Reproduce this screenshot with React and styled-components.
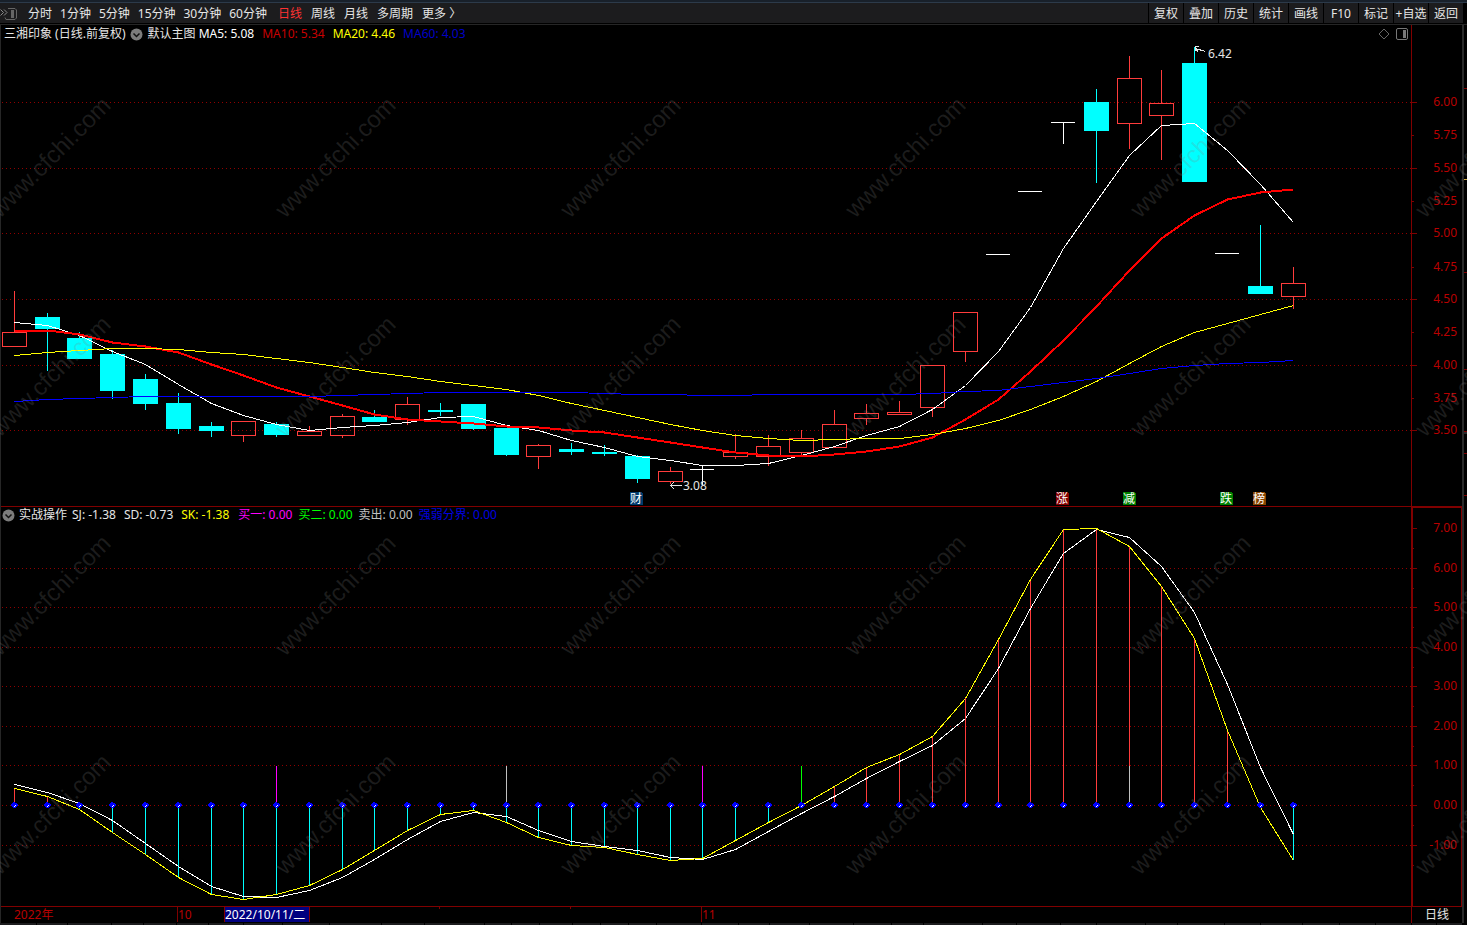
import React from "react";
import styled, { createGlobalStyle } from "styled-components";

const GlobalStyle = createGlobalStyle`
  * { box-sizing: border-box; }
  html, body { margin: 0; background: #000; }
  body, button {
    font-family: "Noto Sans", "Noto Sans CJK SC", sans-serif;
    font-size: 12px;
    line-height: 16px;
  }
`;

const DARK_RED = "#800000";
const LABEL_RED = "#b80000";
const UP = "#ff3c3c";
const DOWN = "#00ffff";

const Page = styled.div`
  position: relative;
  min-height: 100vh;
  overflow: hidden;
  background: #000;
  color: #e6e6e6;
  display: flex;
  flex-direction: column;
`;

const WindowEdge = styled.div`
  height: 3px;
  background: #18202a;
  border-bottom: 1px solid #2c3a4a;
`;

const Toolbar = styled.header`
  display: flex;
  height: 22px;
  padding: 0 4px 1px 0;
  border-bottom: 1px solid #262626;
`;

const ToolbarMain = styled.nav`
  flex: 1;
  display: flex;
  align-items: center;
  padding-top: 2px;
  background: #1c1c1e;
`;

const PeriodGroup = styled.div`
  display: flex;
  gap: ${(p) => p.$gap}px;
  margin-left: ${(p) => p.$start}px;
`;

const PlainButton = styled.button`
  padding: 0;
  border: 0;
  background: none;
  white-space: pre;
  color: ${(p) => (p.$active ? "#ff3232" : "#e6e6e6")};
`;

const IconButton = styled(PlainButton)`
  display: flex;
`;

const Actions = styled.div`
  display: grid;
  grid-template-columns: repeat(9, 35px);
`;

const ActionButton = styled(PlainButton)`
  padding-top: 2px;
  background: #1c1c1e;
  border-left: 1px solid #000;
`;

const Workspace = styled.div`
  display: flex;
`;

const Charts = styled.main`
  flex: 1;
  min-width: 0;
  border-left: 1px solid #262626;
`;

const Panel = styled.section`
  display: grid;
  > * { grid-area: 1 / 1; }
`;

const ChartSvg = styled.svg`
  display: block;
  width: 100%;
  height: auto;
  shape-rendering: crispEdges;
  text {
    font-family: "Noto Sans", "Noto Sans CJK SC", sans-serif;
    font-size: 12px;
  }
`;

const Legend = styled.div`
  z-index: 1;
  align-self: start;
  display: flex;
  align-items: center;
  padding: ${(p) => (p.$indicator ? "0 54px 0 1px" : "1px 54px 0 3px")};
  white-space: pre;
`;

const LegendName = styled.span`
  margin: 0 5px 0 4px;
`;

const Metrics = styled.span`
  display: flex;
  gap: ${(p) => p.$gap}px;
  margin-right: 9px;
`;

const Metric = styled.span`
  color: ${(p) => p.$color};
`;

const LegendTools = styled.span`
  margin-left: auto;
  display: flex;
  gap: 6px;
`;

const TimeAxis = styled.div`
  display: grid;
  grid-template-columns: 13fr 163fr 47fr 85fr 130fr 131fr 131fr 710fr 51fr;
  height: 16px;
  line-height: 15px;
  color: ${LABEL_RED};
`;

const TimeCell = styled.span`
  white-space: nowrap;
  border-left: ${(p) => (p.$tick ? `1px solid ${DARK_RED}` : "0")};
  height: ${(p) => (p.$short ? 2 : 15)}px;
`;

const CursorDate = styled(TimeCell)`
  background: #000080;
  color: #fff;
  border-left: 1px solid ${DARK_RED};
`;

const PeriodCell = styled(TimeCell)`
  color: #e6e6e6;
  text-align: center;
  height: 16px;
`;

const SideEdge = styled.svg`
  width: 5px;
  flex: none;
  align-self: stretch;
  height: auto;
  display: block;
  border-left: 2px solid #2a2a2a;
  shape-rendering: crispEdges;
`;

const Dock = styled.footer`
  display: flex;
  gap: 1px;
  height: 2px;
  padding-right: 5px;
`;

const DockTab = styled.span`
  flex: ${(p) => p.$size} 1 0;
  background: #1c1c1e;
`;

const Watermarks = styled.svg`
  position: absolute;
  inset: 0;
  width: 100%;
  height: 100%;
  z-index: 2;
  pointer-events: none;
  text {
    font-family: "Liberation Sans", sans-serif;
    font-size: 24px;
    fill: rgba(128, 128, 128, 0.22);
  }
`;

const XS = [
  14, 47, 79, 112, 145, 178, 211, 243, 276, 309, 342, 374, 407, 440, 473, 506,
  538, 571, 604, 637, 670, 702, 735, 768, 801, 834, 866, 899, 932, 965, 998,
  1030, 1063, 1096, 1129, 1161, 1194, 1227, 1260, 1293,
];

// kind, high, body top, body bottom, low
const CANDLES = [
  ["u", 291, 332, 347, 347], ["d", 313, 317, 329, 371], ["d", 332, 338, 359, 359],
  ["d", 350, 354, 391, 399], ["d", 374, 379, 404, 410], ["d", 393, 403, 429, 434],
  ["d", 422, 426, 431, 437], ["u", 421, 421, 436, 442], ["d", 422, 424, 435, 437],
  ["u", 426, 431, 436, 436], ["u", 414, 416, 436, 438], ["d", 410, 417, 422, 422],
  ["u", 397, 404, 420, 425], ["d", 403, 410, 412, 416], ["d", 404, 404, 429, 430],
  ["d", 428, 428, 455, 456], ["u", 444, 445, 457, 469], ["d", 443, 449, 452, 455],
  ["d", 445, 452, 454, 456], ["d", 455, 456, 479, 483], ["u", 467, 471, 482, 484],
  ["f", 465, 469, 470, 485], ["u", 434, 452, 457, 459], ["u", 435, 446, 457, 466],
  ["u", 430, 438, 453, 455], ["u", 410, 424, 448, 448], ["u", 404, 413, 419, 425],
  ["u", 401, 412, 415, 415], ["u", 365, 365, 408, 417], ["u", 312, 312, 352, 362],
  ["f", 254, 254, 255, 255], ["f", 191, 191, 192, 192], ["f", 122, 122, 123, 144],
  ["d", 89, 102, 131, 183], ["u", 56, 78, 124, 149], ["u", 70, 103, 116, 160],
  ["d", 47, 63, 182, 182], ["f", 253, 253, 254, 254], ["d", 225, 286, 294, 294],
  ["u", 267, 283, 297, 309],
];

const MA5 = [322, 325, 335, 351, 364, 384, 403, 415, 424, 430, 427, 425, 422, 417, 416, 425, 430, 440, 447, 456, 460, 465, 465, 463, 455, 446, 435, 426, 409, 385, 351, 307, 248, 201, 155, 125, 123, 150, 184, 222];
const MA10 = [330, 330, 334, 342, 346, 352, 364, 375, 387, 396, 405, 414, 419, 421, 423, 426, 427, 430, 432, 437, 442, 447, 452, 455, 456, 454, 451, 446, 437, 419, 399, 371, 340, 306, 270, 238, 215, 199, 192, 189];
const MA20 = [355, 352, 350, 348, 348, 349, 352, 354, 358, 362, 367, 372, 376, 381, 385, 389, 395, 403, 410, 417, 424, 430, 435, 438, 440, 439, 438, 438, 434, 428, 420, 409, 396, 381, 363, 346, 332, 323, 314, 305];
const MA60 = [401, 399, 398, 397, 396, 396, 396, 396, 396, 396, 395, 394, 393, 392, 392, 392, 392, 392, 393, 394, 394, 395, 395, 394, 394, 394, 394, 394, 393, 391, 390, 386, 382, 378, 373, 368, 365, 363, 362, 360];

const SK = [788, 796, 809, 832, 854, 877, 894, 899, 894, 885, 869, 850, 830, 814, 810, 822, 837, 845, 847, 854, 860, 858, 840, 822, 805, 786, 767, 754, 736, 698, 639, 579, 529, 528, 546, 586, 638, 730, 807, 860];
const SD = [784, 792, 803, 820, 843, 866, 886, 896, 897, 890, 877, 859, 839, 821, 812, 816, 830, 841, 846, 850, 857, 859, 849, 831, 813, 796, 778, 761, 745, 718, 668, 608, 553, 529, 537, 566, 612, 684, 767, 834];

const SIGNALS = [[276, "#ff00ff"], [506, "#c0c0c0"], [702, "#ff00ff"], [801, "#00ff00"], [1129, "#c0c0c0"]];

const PRICE_SCALE = [["6.00", 102], ["5.75", 135], ["5.50", 168], ["5.25", 201], ["5.00", 233], ["4.75", 267], ["4.50", 299], ["4.25", 332], ["4.00", 365], ["3.75", 398], ["3.50", 430]];
const INDICATOR_SCALE = [["7.00", 528], ["6.00", 568], ["5.00", 607], ["4.00", 647], ["3.00", 686], ["2.00", 726], ["1.00", 765], ["0.00", 805], ["-1.00", 845]];

const BADGES = [[630, "财", "#003a6c"], [1056, "涨", "#860000"], [1123, "减", "#008000"], [1220, "跌", "#008000"], [1253, "榜", "#884400"]];

const MINUTES = ["分时", "1分钟", "5分钟", "15分钟", "30分钟", "60分钟"];
const PERIODS = ["日线", "周线", "月线", "多周期", "更多 〉"];
const ACTIONS = ["复权", "叠加", "历史", "统计", "画线", "F10", "标记", "+自选", "返回"];

const DOCK_TABS = [37, 31, 45, 32, 33, 32, 35, 40, 48, 52, 44, 61, 27, 28, 33, 28, 28, 28, 45, 38, 31, 40, 45, 38, 32, 60, 34, 45, 36, 50, 32, 48, 36, 42, 38, 36, 36, 25, 26];

function Series({ values, color, width = 1 }) {
  const points = values.map((y, i) => `${XS[i] + 0.5},${y + 0.5}`).join(" ");
  return <polyline points={points} fill="none" stroke={color} strokeWidth={width} />;
}

function Candle({ x, kind, high, top, bottom, low }) {
  if (kind === "f") {
    return (
      <g fill="#fff">
        <rect x={x - 12} y={top} width="24" height="1" />
        <rect x={x} y={high} width="1" height={low - high} />
      </g>
    );
  }
  const color = kind === "u" ? UP : DOWN;
  return (
    <g fill={color}>
      <rect x={x} y={high} width="1" height={top - high} />
      <rect x={x} y={bottom} width="1" height={low - bottom} />
      {kind === "u" ? (
        <rect x={x - 11.5} y={top + 0.5} width="24" height={bottom - top - 1} fill="none" stroke={color} />
      ) : (
        <rect x={x - 12} y={top} width="25" height={bottom - top} />
      )}
    </g>
  );
}

function GridLine({ y }) {
  return <line x1="2" x2="1411" y1={y + 0.5} y2={y + 0.5} stroke="#900000" strokeDasharray="1 3" />;
}

function ScaleLabel({ label, y, major }) {
  return (
    <g>
      <rect x="1412" y={y} width={major ? 5 : 2} height="1" fill={DARK_RED} />
      <text x="1457" y={y + 4} textAnchor="end" fill={LABEL_RED}>{label}</text>
    </g>
  );
}

function PriceChart() {
  return (
    <ChartSvg viewBox="1 25 1461 482" role="img" aria-label="日线">
      {PRICE_SCALE.filter((_, i) => i % 2 === 0).map(([label, y]) => <GridLine key={label} y={y} />)}
      {CANDLES.map(([kind, high, top, bottom, low], i) => (
        <Candle key={XS[i]} x={XS[i]} kind={kind} high={high} top={top} bottom={bottom} low={low} />
      ))}
      <Series values={MA5} color="#fff" />
      <Series values={MA10} color="#f00" width={2} />
      <Series values={MA20} color="#ff0" />
      <Series values={MA60} color="#00f" />
      <path d="M1205.500 51.500L1195.500 48.500M1195 46.500h4M1195.500 47v4M1196 49.500l2 2" fill="none" stroke="#e6e6e6" />
      <text x="1208" y="58" fill="#e6e6e6">6.42</text>
      <path d="M682 485.500H670M674 482l-3.500 3.500l3.500 3.500" fill="none" stroke="#e6e6e6" />
      <text x="683" y="490" fill="#e6e6e6">3.08</text>
      {BADGES.map(([x, label, color]) => (
        <g key={x}>
          <path d={`M${x} 492h11l2 2v11h-13z`} fill={color} />
          <text x={x} y="503" fill="#fff">{label}</text>
        </g>
      ))}
      <rect x="1411" y="25" width="1" height="482" fill={DARK_RED} />
      <rect x="1" y="506" width="1461" height="1" fill={DARK_RED} />
      {PRICE_SCALE.map(([label, y], i) => <ScaleLabel key={label} label={label} y={y} major={i % 2 === 0} />)}
    </ChartSvg>
  );
}

function IndicatorChart() {
  return (
    <ChartSvg viewBox="1 507 1461 400" role="img" aria-label="实战操作">
      {INDICATOR_SCALE.slice(1).map(([label, y]) => <GridLine key={label} y={y} />)}
      {XS.map((x, i) => (
        <rect
          key={x}
          x={x}
          y={Math.min(805, SK[i])}
          width="1"
          height={Math.abs(SK[i] - 805)}
          fill={SK[i] < 805 ? UP : DOWN}
        />
      ))}
      {SIGNALS.map(([x, color]) => <rect key={x} x={x} y="766" width="1" height="39" fill={color} />)}
      <Series values={SD} color="#fff" />
      <Series values={SK} color="#ff0" />
      {XS.map((x) => (
        <g key={x}>
          <path d={`M${x - 1} 802h2v1h2v1h1v2h-1v1h-1v1h-3v-1h-1v-1h-1v-2h1v-1h1z`} fill="#00f" />
          <path d={`M${x} 806h1v1h-1zM${x + 1} 805h1v1h-1z`} fill="#fff" />
        </g>
      ))}
      <rect x="1" y="906" width="1461" height="1" fill={DARK_RED} />
      <rect x="1411" y="507" width="2" height="400" fill={DARK_RED} />
      <rect x="1411" y="507" width="51" height="1" fill={DARK_RED} />
      <rect x="1461" y="507" width="1" height="400" fill={DARK_RED} />
      {INDICATOR_SCALE.map(([label, y]) => (
        <g key={label}>
          <ScaleLabel label={label} y={y} major />
          <rect x="1412" y={y + 20} width="2" height="1" fill={DARK_RED} />
        </g>
      ))}
    </ChartSvg>
  );
}

function PanelIcon({ color }) {
  return (
    <svg width="12" height="12" viewBox="0 0 12 12">
      <rect x="0.500" y="0.500" width="11" height="11" rx="1.500" fill="none" stroke={color} />
      <rect x="7" y="2" width="3" height="8" fill={color} />
    </svg>
  );
}

function MenuIcon() {
  return (
    <svg width="13" height="13" viewBox="0 0 13 13">
      <circle cx="6.500" cy="6.500" r="6" fill="#7c7c7c" />
      <path d="M3.500 5.500l3 3l3-3" fill="none" stroke="#111" strokeWidth="1.500" />
    </svg>
  );
}

function WatermarkLayer() {
  const columns = [0, 1, 2, 3, 4, 5];
  const rows = [0, 1, 2, 3];
  return (
    <Watermarks aria-hidden="true">
      {rows.map((r) => columns.map((c) => (
        <text key={`${r}-${c}`} transform={`translate(${c * 285} ${219 + r * 219}) rotate(-45)`}>www.cfchi.com</text>
      )))}
    </Watermarks>
  );
}

export default function App() {
  return (
    <Page>
      <GlobalStyle />
      <WindowEdge />
      <Toolbar>
        <ToolbarMain>
          <IconButton type="button" aria-label="展开">
            <svg width="17" height="12" viewBox="0 0 17 12">
              <path d="M0.500 1.500l3 3l-3 3M4 1.500l3 3l-3 3" fill="none" stroke="#8a8a8a" />
              <path d="M8 0.500h7l1.500 1.500v8l-1.500 1.500h-9l-1-2" fill="none" stroke="#666" />
              <rect x="11" y="2" width="3" height="8" fill="#666" />
            </svg>
          </IconButton>
          <PeriodGroup $gap={8} $start={11}>
            {MINUTES.map((label) => <PlainButton key={label} type="button">{label}</PlainButton>)}
          </PeriodGroup>
          <PeriodGroup $gap={9} $start={11}>
            {PERIODS.map((label) => (
              <PlainButton key={label} type="button" $active={label === "日线"}>{label}</PlainButton>
            ))}
          </PeriodGroup>
        </ToolbarMain>
        <Actions>
          {ACTIONS.map((label) => <ActionButton key={label} type="button">{label}</ActionButton>)}
        </Actions>
      </Toolbar>
      <Workspace>
        <Charts>
          <Panel>
            <PriceChart />
            <Legend>
              <span>三湘印象 (日线.前复权)</span>
              <LegendName><IconButton type="button" aria-label="主图菜单"><MenuIcon /></IconButton></LegendName>
              <span>默认主图 </span>
              <Metrics $gap={8}>
                <Metric $color="#fff">MA5: 5.08</Metric>
                <Metric $color="#c80000">MA10: 5.34</Metric>
                <Metric $color="#ff0">MA20: 4.46</Metric>
                <Metric $color="#0000c8">MA60: 4.03</Metric>
              </Metrics>
              <LegendTools>
                <IconButton type="button" aria-label="标注">
                  <svg width="12" height="12" viewBox="0 0 12 12">
                    <path d="M6 1l5 5l-5 5l-5-5z" fill="none" stroke="#666" />
                  </svg>
                </IconButton>
                <IconButton type="button" aria-label="侧栏"><PanelIcon color="#777" /></IconButton>
              </LegendTools>
            </Legend>
          </Panel>
          <Panel>
            <IndicatorChart />
            <Legend $indicator>
              <IconButton type="button" aria-label="指标菜单"><MenuIcon /></IconButton>
              <LegendName>实战操作</LegendName>
              <Metrics $gap={8}>
                <Metric $color="#e6e6e6">SJ: -1.38</Metric>
                <Metric $color="#e6e6e6">SD: -0.73</Metric>
                <Metric $color="#ff0">SK: -1.38</Metric>
              </Metrics>
              <Metrics $gap={6}>
                <Metric $color="#ff00ff">买一: 0.00</Metric>
                <Metric $color="#00ff00">买二: 0.00</Metric>
                <Metric $color="#c0c0c0">卖出: 0.00</Metric>
                <Metric $color="#0000e0">强弱分界: 0.00</Metric>
              </Metrics>
            </Legend>
          </Panel>
          <TimeAxis>
            <span />
            <TimeCell>2022年</TimeCell>
            <TimeCell $tick>10</TimeCell>
            <CursorDate>2022/10/11/二</CursorDate>
            <TimeCell $tick />
            <TimeCell $tick $short />
            <TimeCell $tick $short />
            <TimeCell $tick>11</TimeCell>
            <PeriodCell $tick>日线</PeriodCell>
          </TimeAxis>
        </Charts>
        <SideEdge viewBox="0 25 3 898" preserveAspectRatio="none" aria-hidden="true">
          {[88, 272, 369, 431, 453, 495].map((y) => <rect key={y} y={y} width="3" height="1" fill={DARK_RED} />)}
          <rect y="179" width="3" height="1" fill="#d8b040" />
          <rect y="432" width="3" height="2" fill="#2a2a2a" />
        </SideEdge>
      </Workspace>
      <Dock>
        {DOCK_TABS.map((size, i) => <DockTab key={i} $size={size} />)}
      </Dock>
      <WatermarkLayer />
    </Page>
  );
}
